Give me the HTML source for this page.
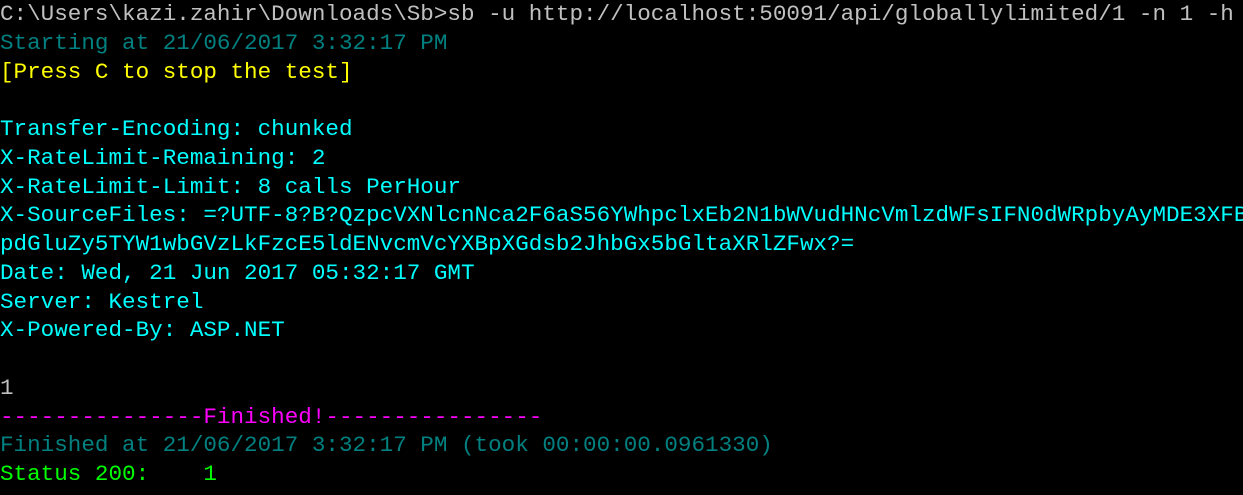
<!DOCTYPE html>
<html><head><style>
html,body{margin:0;padding:0;background:#000;width:1243px;height:495px;overflow:hidden}
pre{position:absolute;left:0;top:0px;margin:0;font-family:"Liberation Mono",monospace;font-size:22.6px;line-height:28.75px;color:#c0c0c0;white-space:pre}
.t{color:#008080}.y{color:#ffff00}.c{color:#00ffff}.m{color:#ff00ff}.g{color:#00ff00}
</style></head><body><pre>C:\Users\kazi.zahir\Downloads\Sb>sb -u http://localhost:50091/api/globallylimited/1 -n 1 -h
<span class="t">Starting at 21/06/2017 3:32:17 PM</span>
<span class="y">[Press C to stop the test]</span>

<span class="c">Transfer-Encoding: chunked
X-RateLimit-Remaining: 2
X-RateLimit-Limit: 8 calls PerHour
X-SourceFiles: =?UTF-8?B?QzpcVXNlcnNca2F6aS56YWhpclxEb2N1bWVudHNcVmlzdWFsIFN0dWRpbyAyMDE3XFB
pdGluZy5TYW1wbGVzLkFzcE5ldENvcmVcYXBpXGdsb2JhbGx5bGltaXRlZFwx?=
Date: Wed, 21 Jun 2017 05:32:17 GMT
Server: Kestrel
X-Powered-By: ASP.NET</span>

1
<span class="m">---------------Finished!----------------</span>
<span class="t">Finished at 21/06/2017 3:32:17 PM (took 00:00:00.0961330)</span>
<span class="g">Status 200:    1</span></pre></body></html>
